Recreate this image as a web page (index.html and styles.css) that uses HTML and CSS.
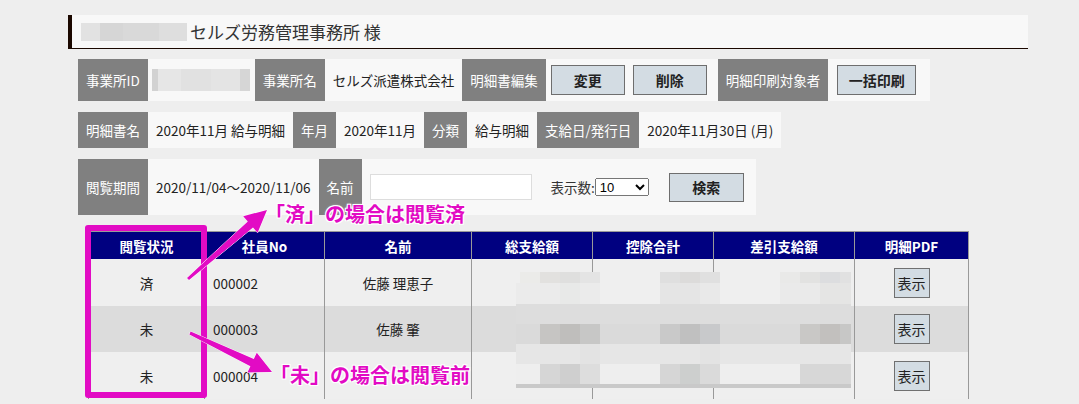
FILE: index.html
```html
<!DOCTYPE html>
<html lang="ja">
	<head>
		<meta charset="UTF-8" />
		<meta name="viewport" content="width=device-width, initial-scale=1.0" />
		<title>明細閲覧状況</title>
		<link rel="stylesheet" href="styles.css">
	</head>
	<body>
		<div class="page">
			<div class="title">
				<span class="blur-name"></span>
				<span>セルズ労務管理事務所 様</span>
			</div>

			<div class="info row-1">
				<div class="lbl">事業所ID</div>
				<div class="val val-id"><span class="blur-id"></span></div>
				<div class="lbl">事業所名</div>
				<div class="val">セルズ派遣株式会社</div>
				<div class="lbl">明細書編集</div>
				<button class="btn btn-edit" type="button">変更</button>
				<button class="btn btn-del" type="button">削除</button>
				<div class="lbl lbl-print">明細印刷対象者</div>
				<button class="btn btn-print" type="button">一括印刷</button>
			</div>

			<div class="info row-2">
				<div class="lbl">明細書名</div>
				<div class="val">2020年11月 給与明細</div>
				<div class="lbl">年月</div>
				<div class="val">2020年11月</div>
				<div class="lbl">分類</div>
				<div class="val">給与明細</div>
				<div class="lbl">支給日/発行日</div>
				<div class="val">2020年11月30日 (月)</div>
			</div>

			<div class="info row-3">
				<div class="lbl">閲覧期間</div>
				<div class="val">2020/11/04～2020/11/06</div>
				<div class="lbl">名前</div>
				<input type="text" class="name-input" />
				<label class="count-label" for="count">表示数:</label>
				<select id="count" class="count"><option>10</option></select>
				<button class="btn btn-search" type="button">検索</button>
			</div>

			<table class="list">
				<colgroup>
					<col class="c-status" />
					<col class="c-no" />
					<col class="c-name" />
					<col class="c-money" />
					<col class="c-money" />
					<col class="c-net" />
					<col class="c-pdf" />
				</colgroup>
				<thead>
					<tr>
						<th>閲覧状況</th>
						<th>社員No</th>
						<th>名前</th>
						<th>総支給額</th>
						<th>控除合計</th>
						<th>差引支給額</th>
						<th>明細PDF</th>
					</tr>
				</thead>
				<tbody>
					<tr>
						<td class="center">済</td>
						<td>000002</td>
						<td class="center">佐藤 理恵子</td>
						<td></td>
						<td></td>
						<td></td>
						<td class="center"><button class="btn-show" type="button">表示</button></td>
					</tr>
					<tr class="alt">
						<td class="center">未</td>
						<td>000003</td>
						<td class="center">佐藤 肇</td>
						<td></td>
						<td></td>
						<td></td>
						<td class="center"><button class="btn-show" type="button">表示</button></td>
					</tr>
					<tr>
						<td class="center">未</td>
						<td>000004</td>
						<td class="center"></td>
						<td></td>
						<td></td>
						<td></td>
						<td class="center"><button class="btn-show" type="button">表示</button></td>
					</tr>
				</tbody>
			</table>
		</div>

		<!-- pixelated amounts laid over the money columns -->
		<svg class="mosaic" width="1079" height="404" viewBox="0 0 1079 404">
			<rect x="520" y="272" width="20" height="11" fill="#ebebe9"/>
			<rect x="540" y="272" width="20" height="11" fill="#e2e1df"/>
			<rect x="560" y="272" width="20" height="11" fill="#dfdfde"/>
			<rect x="580" y="272" width="20" height="11" fill="#e4e4e4"/>
			<rect x="660" y="272" width="20" height="11" fill="#dfdfdf"/>
			<rect x="680" y="272" width="20" height="11" fill="#dcdbda"/>
			<rect x="700" y="272" width="20" height="11" fill="#e0e0e0"/>
			<rect x="780" y="272" width="20" height="11" fill="#e9e9e8"/>
			<rect x="800" y="272" width="20" height="11" fill="#e2e2e1"/>
			<rect x="820" y="272" width="20" height="11" fill="#dcdddf"/>
			<rect x="840" y="272" width="11" height="11" fill="#e1e1e1"/>

			<rect x="516" y="283" width="84" height="21" fill="#ebebeb"/>
			<rect x="560" y="283" width="20" height="21" fill="#e8e9e8"/>
			<rect x="660" y="283" width="60" height="21" fill="#e5e5e5"/>
			<rect x="700" y="283" width="20" height="21" fill="#e9e9e9"/>
			<rect x="780" y="283" width="71" height="21" fill="#eaeaea"/>
			<rect x="820" y="283" width="31" height="21" fill="#e5e5e4"/>

			<rect x="516" y="304" width="335" height="20" fill="#dddddd"/>

			<rect x="516" y="324" width="335" height="20" fill="#dadada"/>
			<rect x="540" y="324" width="20" height="20" fill="#c6c5c3"/>
			<rect x="560" y="324" width="20" height="20" fill="#bfbebc"/>
			<rect x="580" y="324" width="20" height="20" fill="#c7c7c6"/>
			<rect x="660" y="324" width="20" height="20" fill="#c9c9c9"/>
			<rect x="680" y="324" width="20" height="20" fill="#c0c0c0"/>
			<rect x="700" y="324" width="20" height="20" fill="#c8c9cb"/>
			<rect x="800" y="324" width="20" height="20" fill="#c9c8c6"/>
			<rect x="820" y="324" width="20" height="20" fill="#c2c0be"/>
			<rect x="840" y="324" width="11" height="20" fill="#c7c7c6"/>

			<rect x="516" y="344" width="335" height="20" fill="#e6e6e6"/>
			<rect x="580" y="344" width="20" height="20" fill="#e3e3e3"/>
			<rect x="700" y="344" width="20" height="20" fill="#e3e3e3"/>

			<rect x="516" y="364" width="335" height="20" fill="#eeeeee"/>
			<rect x="540" y="364" width="20" height="20" fill="#d6d6d6"/>
			<rect x="560" y="364" width="20" height="20" fill="#cfcfcf"/>
			<rect x="580" y="364" width="20" height="20" fill="#dddddd"/>
			<rect x="660" y="364" width="20" height="20" fill="#d6d6d6"/>
			<rect x="680" y="364" width="20" height="20" fill="#cdcfce"/>
			<rect x="700" y="364" width="20" height="20" fill="#dadada"/>
			<rect x="800" y="364" width="51" height="20" fill="#d7d7d7"/>

			<rect x="516" y="384" width="335" height="4" fill="#c9c9c9"/>
		</svg>

		<div class="mark-box"></div>

		<svg class="arrows" width="1079" height="404" viewBox="0 0 1079 404">
			<polygon points="187.0,277.9 247.8,221.5 243.2,216.2 267,210 257.6,232.8 253.0,227.5 189.0,280.1"/>
			<polygon points="190.6,331.6 253.8,359.0 256.8,352.7 272,372 247.4,372.5 250.4,366.2 189.4,334.4"/>
		</svg>

		<div class="note note-read">「済」の場合は閲覧済</div>
		<div class="note note-unread">「未」の場合は閲覧前</div>
	</body>
</html>
```

FILE: styles.css
```css
body {
	margin: 0;
	position: relative;
	height: 404px;
	overflow: hidden;
	background: #eeeeee;
	color: #222;
	font-family: "Noto Sans CJK JP", "Noto Sans", sans-serif;
	font-size: 13.5px;
}
.page {
	padding: 15px 0 0 68px;
	width: 960px;
}
.title {
	height: 33px;
	display: flex;
	align-items: center;
	padding-left: 9px;
	background: #f8f8f8;
	border-left: 4px solid #1b0800;
	border-bottom: 1px solid #1b0800;
	font-size: 17px;
	color: #333;
}
.blur-name {
	width: 106px;
	height: 18px;
	margin-right: 3px;
	background: linear-gradient(to right, #e2e2e2 0 18%, #d6d6d6 18% 40%, #d9d9d9 40% 74%, #dedede 74%);
}
.info {
	display: flex;
	width: fit-content;
	margin: 11px 0 0 10px;
	background: #f8f8f8;
}
.row-1 {
	height: 42px;
	margin-top: 10px;
	align-items: center;
	padding-right: 14px;
}
.row-2 {
	height: 36px;
}
.row-3 {
	height: 56px;
	align-items: center;
	padding-right: 12px;
}
.lbl {
	align-self: stretch;
	display: flex;
	align-items: center;
	padding: 0 8px;
	background: #808080;
	color: #fff;
}
.val {
	display: flex;
	align-items: center;
	padding: 0 8px;
	white-space: nowrap;
}
.val-id {
	padding: 0 5px 0 4px;
}
.blur-id {
	width: 98px;
	height: 22px;
	background: linear-gradient(to right, #d2d2d2 0 6%, #e6e6e6 6% 30%, #e1e1e1 30% 60%, #e4e4e4 60% 90%, #d6d6d6 90%);
}
.btn {
	height: 30px;
	border: 1px solid #6e6e6e;
	background: #d3dce3;
	color: #222;
	font-family: inherit;
	font-size: 14px;
	font-weight: bold;
	padding: 0;
}
.btn-edit {
	width: 74px;
	margin-left: 5px;
}
.btn-del {
	width: 74px;
	margin-left: 8px;
}
.lbl-print {
	margin-left: 11px;
}
.btn-print {
	width: 79px;
	margin-left: 9px;
}
.name-input {
	width: 162px;
	height: 26px;
	box-sizing: border-box;
	margin-left: 8px;
	border: 1px solid #dddddd;
	background: #fff;
}
.count-label {
	margin-left: 19px;
	color: #333;
}
.count {
	width: 54px;
	height: 18px;
	font-size: 13px;
	padding: 0;
}
.btn-search {
	width: 75px;
	height: 29px;
	margin-left: 20px;
}
.list {
	margin: 16px 0 0 20px;
	width: 880px;
	table-layout: fixed;
	border-collapse: collapse;
}
.c-status {
	width: 116px;
}
.c-no {
	width: 120px;
}
.c-name {
	width: 147px;
}
.c-money {
	width: 121px;
}
.c-net {
	width: 141px;
}
.c-pdf {
	width: 114px;
}
.list th {
	height: 27px;
	padding: 0;
	background: #000080;
	color: #fff;
	font-weight: bold;
	border: 1px solid #999;
	border-bottom: none;
}
.list td {
	height: 47px;
	padding: 0 0 0 8px;
	background: #efefef;
	border-left: 1px solid #999;
	border-right: 1px solid #999;
}
.list tr.alt td {
	height: 46px;
	background: #dcdcdc;
}
.list td.center {
	text-align: center;
	padding: 0;
}
.btn-show {
	width: 36px;
	height: 30px;
	padding: 0;
	border: 1px solid #707070;
	background: #d3dce3;
	color: #222;
	font-family: inherit;
	font-size: 14px;
}
.mosaic,
.arrows {
	position: absolute;
	left: 0;
	top: 0;
	pointer-events: none;
}
.arrows polygon {
	fill: #e20bc4;
	stroke: #fff;
	stroke-width: 1;
	paint-order: stroke;
}
.mark-box {
	position: absolute;
	left: 85px;
	top: 225px;
	width: 110px;
	height: 161px;
	border: 6px solid #e20bc4;
	border-radius: 3px;
}
.note {
	position: absolute;
	font-size: 20px;
	line-height: 20px;
	font-weight: bold;
	color: #e20bc4;
	white-space: nowrap;
	text-shadow: 1px 1px 0 #fff, -1px -1px 0 #fff, 1px -1px 0 #fff, -1px 1px 0 #fff, 0 0 3px #fff;
}
.note-read {
	left: 265px;
	top: 204px;
}
.note-unread {
	left: 270px;
	top: 365px;
}
```
